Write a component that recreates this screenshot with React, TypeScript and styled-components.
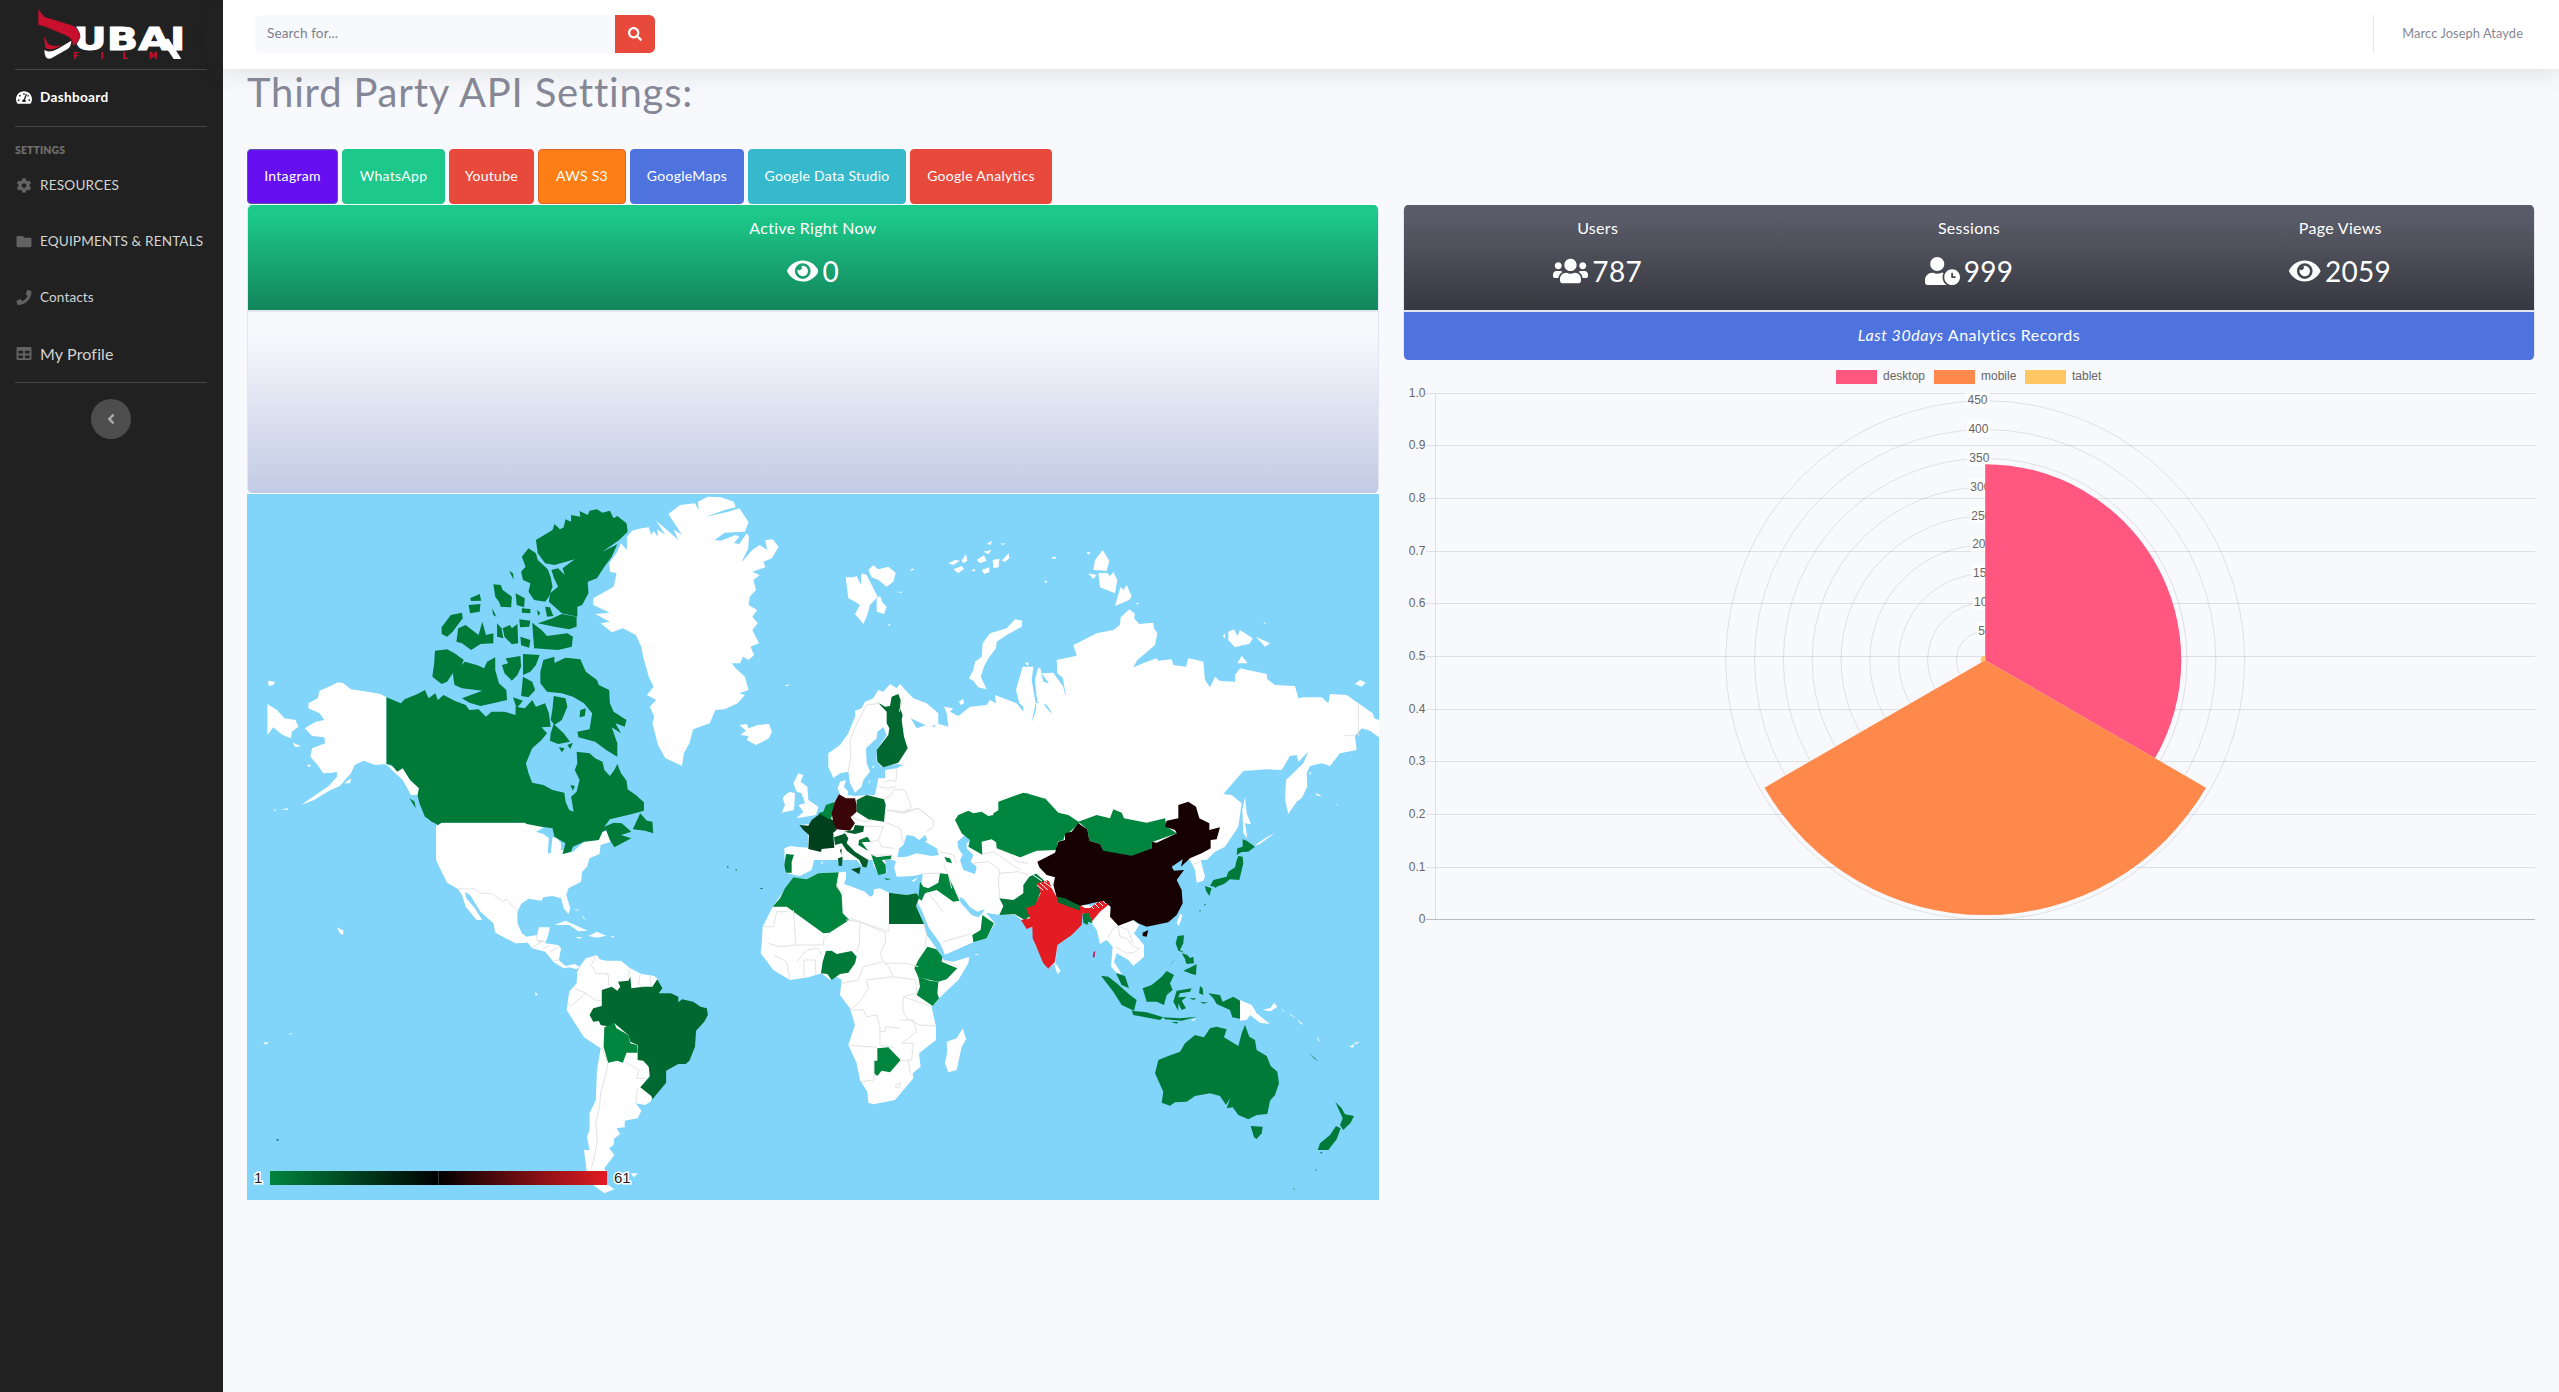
import React from 'react';
import styled, { createGlobalStyle, css } from 'styled-components';
import {
  FaAngleLeft,
  FaCog,
  FaEye,
  FaFolder,
  FaPhone,
  FaSearch,
  FaTable,
  FaTachometerAlt,
  FaUserClock,
  FaUsers,
} from 'react-icons/fa';

const GlobalStyle = createGlobalStyle`
  *, *::before, *::after { box-sizing: border-box; }
  body {
    margin: 0;
    background: #f8f9fc;
    color: #858796;
    font-family: Lato, "Open Sans", sans-serif;
    font-size: 16px;
    line-height: 1.5;
  }
`;

/* ---------- Shell ---------- */

const Page = styled.div`
  display: flex;
  width: 100%;
  min-height: 1392px;
`;

const Sidebar = styled.nav`
  display: flex;
  flex-direction: column;
  flex: 0 0 223px;
  background: #212121;
`;

const Brand = styled.div`
  height: 69px;
  padding-left: 30px;
`;

const Divider = styled.hr`
  width: 192px;
  height: 1px;
  margin: 0 0 0 15px;
  border: 0;
  background: #474747;
`;

const Heading = styled.div`
  padding: 16px 15px 0;
  height: 31px;
  color: #6d6d6d;
  font-size: 10.4px;
  font-weight: 800;
  line-height: 15px;
  letter-spacing: 0.15px;
`;

const NavItem = styled.a<{ $active?: boolean; $size?: number; $spacing?: number }>`
  display: flex;
  align-items: center;
  gap: 8px;
  height: 56px;
  padding: 0 0 1px 16px;
  white-space: nowrap;
  color: ${(p) => (p.$active ? '#fff' : '#d3d3d3')};
  font-size: ${(p) => p.$size ?? 13.6}px;
  font-weight: ${(p) => (p.$active ? 700 : 400)};
  letter-spacing: ${(p) => p.$spacing ?? 0.08}px;

  svg {
    flex: 0 0 16px;
    font-size: 15px;
    color: ${(p) => (p.$active ? '#fff' : '#636363')};
  }
`;

const Toggle = styled.button`
  display: flex;
  align-items: center;
  justify-content: center;
  align-self: center;
  width: 40px;
  height: 40px;
  margin: 16px 2px 0 0;
  padding: 0;
  border: 0;
  border-radius: 50%;
  background: #4d4d4d;
  color: #a9a9a9;
  font-size: 16px;
`;

const Content = styled.div`
  flex: 1;
  min-width: 0;
  display: flex;
  flex-direction: column;
`;

const Topbar = styled.header`
  display: flex;
  justify-content: space-between;
  height: 69px;
  padding: 15px 36px 0 32px;
  background: #fff;
  box-shadow: 0 2px 28px rgba(58, 59, 69, 0.15);
`;

const Search = styled.div`
  display: flex;
  height: 38px;
`;

const SearchField = styled.div`
  width: 360px;
  padding: 0 12px;
  border-radius: 5.6px 0 0 5.6px;
  background: #f8f9fc;
  color: #7d7f8c;
  font-size: 13.6px;
  line-height: 37px;
  letter-spacing: 0.1px;
`;

const SearchButton = styled.button`
  display: flex;
  align-items: center;
  justify-content: center;
  width: 40px;
  padding: 0;
  border: 0;
  border-radius: 0 5.6px 5.6px 0;
  background: #e74a3b;
  color: #fff;
  font-size: 14px;
`;

const Account = styled.div`
  height: 38px;
  padding-left: 28px;
  border-left: 1px solid #e3e6f0;
  color: #858796;
  font-size: 12.8px;
  line-height: 37px;
  letter-spacing: 0.1px;
`;

const Title = styled.h1`
  margin: 0;
  padding-left: 24px;
  height: 80px;
  font-size: 40px;
  font-weight: 400;
  line-height: 46px;
  letter-spacing: 0.8px;
`;

const ButtonRow = styled.div`
  display: flex;
  gap: 4px;
  padding-left: 24px;
`;

const ApiButton = styled.button<{ $width: number; $color: string; $border?: string }>`
  width: ${(p) => p.$width}px;
  height: 55px;
  padding: 0 0 2px;
  border: 1px solid ${(p) => p.$border ?? p.$color};
  border-radius: 4px;
  background: ${(p) => p.$color};
  color: #fff;
  font-family: inherit;
  font-size: 14px;
  letter-spacing: 0.3px;
  white-space: nowrap;
`;

/* ---------- Cards ---------- */

const Columns = styled.div`
  display: grid;
  grid-template-columns: 1132px 1132px;
  column-gap: 24px;
  padding: 1px 0 0 24px;
`;

const Column = styled.section`
  display: flex;
  flex-direction: column;
`;

const Card = styled.div`
  border: solid #e3e6f0;
  border-width: 0 1px;
  border-radius: 5px;
  overflow: hidden;
`;

const CardHeader = styled.div<{ $from: string; $to: string }>`
  display: flex;
  height: 105px;
  padding: 11px 8px 0;
  color: #fff;
  background: linear-gradient(180deg, ${(p) => p.$from} 10%, ${(p) => p.$to} 100%);
`;

const Metric = styled.div`
  flex: 1;
  display: flex;
  flex-direction: column;
  align-items: center;
  line-height: 24px;
  letter-spacing: 0.3px;
`;

const MetricValue = styled.div<{ $icon: number }>`
  display: flex;
  align-items: center;
  gap: 4px;
  margin-top: 14px;
  font-size: 28px;
  line-height: 34px;

  svg {
    flex: none;
    width: ${(p) => p.$icon}px;
    height: 28px;
  }
`;

const bar = css`
  border-top: 2px solid #e3e6f0;
`;

const LightBody = styled.div`
  ${bar}
  height: 183px;
  background: linear-gradient(180deg, #f8f9fc 10%, #c2cbe5 100%);
`;

const BlueFooter = styled.div`
  ${bar}
  height: 50px;
  background: #4e73df;
  color: #fff;
  line-height: 45px;
  letter-spacing: 0.5px;
  text-align: center;
`;

const MapCanvas = styled.svg`
  display: block;
  width: 1132px;
  height: 706px;
  margin-top: 1px;
  background: #81d4fa;
`;

const ChartCanvas = styled.svg`
  display: block;
  width: 1132px;
  height: 566px;
  font-family: "Liberation Sans", Arial, sans-serif;
  font-size: 12px;
`;

/* ---------- Logo ---------- */

const Logo = () => (
  <svg width="180" height="68" viewBox="0 0 540 204" aria-label="Dubai Film">
    <path d="M391 116 L416 116 L454 177 L431 177 Z" fill="#fff" />
    <text
      x="130"
      y="150"
      fill="#fff"
      stroke="#fff"
      strokeWidth="3"
      fontFamily="DejaVu Sans, sans-serif"
      fontWeight="700"
      fontSize="96"
      textLength="336"
      lengthAdjust="spacingAndGlyphs"
    >
      UBAI
    </text>
    <path d="M24 26 L44 50 L128 76 Q150 88 150 112 Q142 134 128 139 Q130 116 108 107 L44 80 L24 76 Z" fill="#c8102e" stroke="#212121" strokeWidth="2" />
    <path d="M42 108 L54 132 Q68 142 96 136 Q62 156 46 143 Z" fill="#c8102e" />
    <path d="M43 150 Q58 160 84 146 L124 122 Q124 138 113 147 L64 175 Q44 182 43 150 Z" fill="#fff" />
    <text x="129 211 277 356" y="177" fill="#c8102e" fontFamily="DejaVu Sans, sans-serif" fontWeight="700" fontSize="26">
      FILM
    </text>
  </svg>
);

/* ---------- World map ---------- */

const LAND = '#ffffff';
const G1 = '#00853e';
const G2 = '#007a39';
const G3 = '#00692f';

type Shape = [fill: string, points: string];
interface Sheet {
  transform: string;
  shapes: Shape[];
  borders?: string;
}

const americasNorth: Sheet = {
  transform: 'translate(240 490) scale(0.3699 0.33333)',
  shapes: [
    [LAND, '1046,140 1060,122 1085,115 1105,112 1112,135 1118,122 1130,140 1128,118 1150,135 1125,92 1160,125 1185,150 1172,118 1195,135 1158,72 1190,45 1230,40 1240,60 1238,35 1265,20 1300,22 1335,35 1340,52 1310,60 1260,80 1320,65 1350,55 1375,97 1365,125 1310,128 1283,150 1300,152 1340,135 1350,140 1335,160 1350,162 1370,130 1376,140 1374,175 1355,218 1385,180 1405,165 1425,180 1420,150 1440,148 1456,170 1438,205 1415,215 1420,232 1385,245 1405,255 1388,270 1395,300 1378,320 1375,345 1398,360 1385,380 1400,400 1385,420 1403,460 1380,470 1390,495 1375,510 1360,500 1352,520 1330,520 1340,535 1365,560 1375,600 1350,610 1365,615 1345,640 1310,658 1285,660 1270,700 1225,718 1215,760 1200,790 1195,828 1180,820 1150,805 1130,765 1115,700 1120,680 1108,650 1125,630 1100,615 1118,590 1105,560 1090,500 1085,470 1070,435 1035,415 1005,427 975,400 1000,395 960,372 1000,368 955,345 955,325 1010,290 1018,250 1000,245 998,220 1020,185 1030,160 1046,180'],
    [LAND, '1350,705 1370,702 1375,715 1400,705 1430,702 1438,725 1430,745 1395,765 1370,750 1375,738 1352,735 1368,722'],
    [LAND, '396,622 380,612 345,605 300,598 280,580 265,577 240,590 215,602 210,625 185,640 185,655 215,670 228,690 205,695 175,715 195,738 228,742 230,760 195,775 190,800 210,825 225,850 250,848 262,845 262,860 240,888 200,918 165,945 200,930 245,900 270,888 300,850 310,825 335,812 365,825 396,822 425,838 440,835 460,870 484,895 480,915 462,915 440,870 425,855 396,824'],
    [LAND, '74,642 100,660 120,685 150,690 158,710 140,725 138,745 115,735 90,712 74,735'],
    [LAND, '75,572 95,575 90,585 78,588'],
    [LAND, '142,758 165,768 150,772'],
    [LAND, '282,880 300,865 298,880'],
    [LAND, '180,824 192,824 188,832'],
    [LAND, '90,961 97,958 96,963'],
    [LAND, '112,958 130,955 128,960'],
    [LAND, '1472,588 1484,582 1482,588'],
    [G2, '396,622 435,640 445,628 480,612 500,600 510,625 528,610 535,630 550,615 580,632 610,645 620,660 645,658 665,680 680,665 715,665 745,675 745,650 770,655 790,630 800,650 825,640 835,670 840,710 815,712 830,730 815,750 790,775 773,820 780,850 790,878 820,885 845,900 877,908 880,935 890,960 902,965 895,920 910,905 918,870 905,840 912,820 910,785 945,790 960,805 980,815 985,840 1000,858 1012,840 1020,822 1030,850 1045,872 1048,898 1070,915 1092,937 1092,962 1060,972 1000,988 985,1010 1010,998 1032,1000 1058,1025 1030,1035 1058,1045 1012,1072 1000,1050 990,1020 980,1025 970,1050 930,1055 900,1070 895,1085 872,1092 880,1060 850,1040 845,1015 815,1010 775,1002 770,998 545,998 535,1005 500,980 485,940 480,915 484,895 460,870 440,835 425,845 410,825 396,822'],
    [G2, '1062,1018 1082,970 1100,992 1115,995 1117,1030 1095,1022'],
    [G2, '498,975 525,995 540,1005 518,995'],
    [G2, '458,925 472,935 475,955'],
    [G2, '527,482 560,478 580,490 605,510 595,535 575,550 560,575 545,582 520,560 525,520'],
    [G2, '575,550 608,515 640,525 660,535 668,515 690,502 690,540 700,580 720,600 722,630 690,638 650,648 620,638 600,625 655,602 600,595 580,585'],
    [G2, '708,525 725,520 718,505 758,498 760,530 750,555 735,572 715,550'],
    [G2, '765,492 810,495 800,525 785,545 765,555'],
    [G2, '765,560 790,575 798,600 780,622 760,618'],
    [G2, '738,622 765,632 748,655'],
    [G2, '820,510 850,500 850,560 848,520 880,503 920,508 935,545 965,570 970,585 998,600 1000,640 1010,665 1045,690 1040,710 1015,700 1030,730 1005,712 1020,760 1020,800 990,780 960,755 915,742 912,725 945,718 952,670 930,640 900,620 870,610 830,605 812,580 812,545'],
    [G2, '848,618 880,625 885,650 870,690 850,705 840,690 845,655'],
    [G2, '848,702 875,730 892,755 860,762 838,752 840,730'],
    [G2, '862,772 878,775 870,787'],
    [G2, '885,765 900,758 893,777'],
    [G2, '920,660 935,655 932,678 918,682'],
    [G2, '893,885 905,888 900,902'],
    [G2, '790,398 815,420 830,438 885,430 900,440 897,470 860,480 795,475'],
    [G2, '805,400 845,385 870,372 910,380 910,410 890,418 850,410'],
    [G2, '800,150 845,120 850,102 865,118 875,112 880,88 895,95 895,75 920,80 918,63 940,75 945,62 965,58 980,68 1000,62 1010,85 1020,78 1045,100 1048,125 1025,150 980,185 1020,163 1005,200 985,230 965,265 940,275 942,310 925,345 912,350 912,380 870,370 835,335 838,310 860,290 848,262 842,240 860,235 878,255 872,235 905,208 850,225 825,220 805,190'],
    [G2, '780,175 800,190 805,210 832,238 840,262 845,290 835,320 825,335 795,330 780,305 785,280 765,270 760,245 772,230 762,200'],
    [G2, '685,283 705,285 710,300 735,320 733,352 705,350 700,335 690,320'],
    [G2, '745,310 770,325 768,352 748,345'],
    [G2, '728,243 738,250 740,270'],
    [G2, '622,325 648,312 652,332 625,333'],
    [G2, '618,345 650,342 648,365 622,370'],
    [G2, '682,355 693,380 684,374'],
    [G2, '570,375 600,368 602,385 575,425 560,440 545,432 545,412'],
    [G2, '590,415 610,405 645,435 655,395 665,435 685,430 685,460 650,462 625,480 600,460 585,455'],
    [G2, '695,400 707,415 712,445 695,440'],
    [G2, '710,415 730,405 735,415 750,402 752,460 735,463 715,440'],
    [G2, '758,440 785,450 782,473 760,466'],
    [G2, '755,388 785,392 782,410 757,412'],
    [G2, '762,355 785,357 785,370 762,368'],
    [G2, '825,350 838,352 847,378 830,380'],
    [G2, '803,360 812,368 806,378'],
  ],
};

const americasSouth: Sheet = {
  transform: 'translate(240 840) scale(0.3699 0.33333)',
  shapes: [
    [LAND, '530,-42 545,-52 770,-52 815,-40 850,-10 878,12 872,42 900,35 930,5 968,0 980,-25 990,-28 1002,5 975,15 972,42 945,55 938,80 925,95 922,125 888,145 882,165 893,205 888,222 875,205 868,175 845,168 820,172 815,182 780,176 760,192 750,215 750,250 762,280 775,290 803,285 808,262 838,262 832,290 825,310 860,315 868,325 862,360 880,378 905,372 918,380 910,388 890,382 875,385 850,368 825,335 790,325 778,308 745,310 690,278 685,250 650,215 622,165 608,155 612,175 635,205 655,240 640,240 610,200 600,165 590,148 560,128 545,95 530,60'],
    ['#81d4fa', '800,-25 830,-42 850,-28 872,-8 845,-8 840,40 832,40 835,-5 820,-18'],
    ['#81d4fa', '858,-5 880,10 875,30 868,30 868,10'],
    [LAND, '850,255 880,242 940,272 915,274 890,255'],
    [LAND, '942,288 965,275 990,287 965,293'],
    [LAND, '1000,289 1012,289 1010,293'],
    [LAND, '907,291 926,291 918,296'],
    [LAND, '905,208 918,210 908,212'],
    [LAND, '925,225 935,240 928,235'],
    [LAND, '262,262 280,272 278,285 270,280'],
    [LAND, '62,608 78,606 70,614'],
    [LAND, '132,580 143,581 137,584'],
    [LAND, '797,457 805,462 800,468'],
    [LAND, '918,380 935,355 965,345 972,358 990,362 1030,362 1055,385 1085,402 1120,408 1130,418 1100,480 1080,600 1078,640 1105,680 1108,705 1085,740 1115,770 1110,785 1095,795 1070,790 1085,812 1075,835 1040,842 1040,862 1018,865 1028,882 1012,895 1010,915 998,925 1012,945 985,985 992,1000 990,1030 1012,1048 985,1060 955,1035 938,1000 930,930 945,930 938,890 945,870 945,820 962,780 965,690 975,625 930,592 883,510 890,455 910,430 912,395'],
    [LAND, '1056,1000 1075,1000 1065,1012'],
    [G3, '978,450 1005,440 1020,452 1028,440 1022,425 1050,422 1055,410 1058,445 1090,440 1115,440 1128,418 1142,445 1132,460 1165,460 1185,470 1185,487 1195,478 1225,485 1245,500 1262,505 1265,525 1255,545 1233,572 1230,620 1215,662 1205,672 1185,672 1152,692 1152,728 1115,778 1112,768 1082,742 1108,710 1105,680 1090,662 1075,660 1075,615 1055,605 1050,585 1012,550 1000,560 975,555 970,543 955,545 945,525 955,505 978,498'],
    [G1, '985,562 1012,550 1018,565 1050,585 1055,610 1073,615 1075,638 1045,638 1035,668 1020,662 995,668 983,620'],
    ['#0b6f8f', '99,897 104,897 104,902 99,902'],
    [G3, '1316,78 1321,80 1319,84'],
    [G3, '1339,88 1344,89 1341,93'],
    [G3, '1407,144 1413,145 1409,148'],
  ],
  borders:
    'M590,147 H635 L650,160 H680 L710,185 L720,178 L752,215 M803,285 V300 L820,303 L790,322 M820,325 L835,318 M838,335 L860,322 M850,362 L862,360 M962,348 L950,375 L962,400 L995,402 L998,440 M905,445 L935,460 L892,500 L888,488 M935,460 L960,480 L975,482 M1055,385 L1050,410 M1082,402 L1078,430 L1088,442 M1110,408 V438 M978,620 L995,672 L985,720 L975,760 L972,800 L962,850 L966,900 L960,940 L950,985 M1040,665 L1078,690 L1072,715 H1100 M1075,745 L1070,790 M803,305 H825',
};

const europeNorth: Sheet = {
  transform: 'translate(740 490) scale(0.33333)',
  shapes: [
    [LAND, '265,790 300,765 325,730 345,680 345,662 365,655 375,635 400,625 415,600 430,605 450,582 470,595 480,582 498,602 520,625 560,640 595,670 595,700 570,712 512,685 530,715 560,705 582,712 560,745 590,700 625,710 620,670 612,650 640,655 630,665 655,678 690,650 740,645 750,630 768,640 765,615 830,640 850,665 850,650 838,640 828,600 848,530 880,530 875,570 887,640 875,698 890,660 888,640 905,635 925,670 940,682 925,645 890,620 885,570 895,530 905,578 930,585 905,550 940,548 970,590 975,615 983,620 970,565 952,550 952,510 1020,498 1020,1110 135,1110 135,1075 150,1068 205,1075 208,1025 180,1005 235,1000 250,970 280,935 305,930 293,895 300,875 318,870 312,890 325,905 322,915 345,918 380,915 405,915 412,880 415,865 435,865 435,840 470,835 490,825 470,822 425,830 410,815 410,780 440,735 430,712 412,725 410,745 378,775 380,820 390,845 370,870 365,890 345,908 330,880 325,845 300,850 280,865 265,830'],
    [LAND, '175,850 190,855 182,875 202,890 205,930 235,950 228,975 170,985 190,965 175,945 195,940 185,910 170,905 160,880'],
    [LAND, '135,915 150,905 165,910 162,960 125,968 135,945 128,925'],
    [LAND, '317,262 340,262 350,258 362,285 365,250 380,255 400,295 413,320 390,345 382,375 370,402 345,372 360,345 345,335 325,325'],
    [LAND, '385,240 400,226 415,238 445,230 467,248 460,275 440,290 415,270 395,262'],
    [LAND, '410,325 420,318 428,338 440,350 432,372 410,365'],
    [LAND, '508,242 518,235 522,240'],
    [LAND, '475,308 485,304 486,308'],
    [LAND, '445,402 451,402 448,410'],
    [LAND, '625,220 645,210 660,212 640,225'],
    [LAND, '665,212 678,192 682,212 670,220'],
    [LAND, '640,238 665,228 672,236 655,250'],
    [LAND, '710,210 732,196 740,212 720,220'],
    [LAND, '730,185 755,180 745,192'],
    [LAND, '740,162 756,152 752,164'],
    [LAND, '758,210 778,206 776,232 760,234'],
    [LAND, '725,240 748,232 748,246 732,252'],
    [LAND, '785,212 806,190 808,205 795,215'],
    [LAND, '693,242 704,236 706,244'],
    [LAND, '782,160 798,161 788,165'],
    [LAND, '935,204 948,200 946,207'],
    [LAND, '912,273 922,274 918,278'],
    [LAND, '687,565 700,540 705,515 725,500 728,460 750,430 800,415 825,388 847,392 845,410 800,435 770,455 768,475 745,505 732,530 722,560 740,598 715,592 700,572'],
    [LAND, '657,635 670,626 672,640 662,645'],
    [LAND, '855,520 865,515 865,528'],
    [LAND, '395,832 403,826 402,834'],
    [LAND, '385,880 392,865 388,880'],
    [G3, '412,636 435,650 450,648 455,620 475,612 482,630 480,655 488,675 485,690 492,740 503,775 475,818 430,832 412,815 410,780 445,735 448,715 440,700 440,665'],
  ],
  borders:
    'M420,640 L380,645 L355,690 L330,750 L332,800 L325,845 M470,838 L468,875 L450,870 L430,878 M415,890 L445,895 L468,890 M435,925 L450,920 L462,898 L495,900 L515,950 L490,970 L440,960 M490,970 L535,955 L580,990 L582,1020 L560,1030 M478,665 L490,620',
};

const europeAfrica: Sheet = {
  transform: 'translate(740 780) scale(0.33333)',
  shapes: [
    [LAND, '205,140 1020,120 1020,440 1000,450 950,492 948,545 925,566 885,495 880,440 860,445 845,420 825,405 780,405 738,398 765,430 740,475 700,487 615,524 600,490 565,440 545,390 533,370 540,340 545,310 548,282 520,288 470,290 462,262 468,245 455,238 435,240 440,280 415,282 400,255 395,225 375,205 345,182 350,200 385,240 370,265 350,240 320,210 300,190 270,200 245,215 205,203'],
    [LAND, '133,205 150,200 205,203 247,215 222,240 215,270 180,288 155,283 135,278'],
    [LAND, '98,380 160,292 200,298 235,280 295,277 318,275 318,295 312,312 330,318 375,335 390,350 400,345 402,328 420,325 447,338 500,345 530,340 538,352 528,378 545,415 560,465 600,520 610,540 640,545 688,530 685,550 655,600 597,655 575,682 588,740 588,780 537,820 542,860 518,880 520,895 465,960 400,973 385,968 382,935 360,900 350,850 325,795 345,735 330,685 300,645 305,600 290,590 270,600 245,580 205,592 150,600 100,570 62,520 65,495 68,440'],
    [LAND, '668,745 678,778 665,800 650,870 625,877 615,850 622,815 620,785 650,775'],
    ['#81d4fa', '500,165 520,168 538,180 555,165 562,180 555,185 590,205 597,225 575,228 530,220 500,230 472,232 478,205 490,195'],
    ['#81d4fa', '652,185 675,165 697,162 697,180 680,190 680,205 700,225 692,245 710,260 705,282 670,270 660,240 668,225 655,205'],
    ['#81d4fa', '658,350 672,358 690,382 712,395 735,388 725,402 715,412 695,405 662,368'],
    [LAND, '515,302 535,292 522,305'],
    [LAND, '242,248 250,244 246,253'],
    [LAND, '705,522 718,523 708,526'],
    [G1, '98,380 120,355 135,325 160,292 200,298 235,280 297,277 290,315 305,345 308,400 328,420 268,458 250,460 140,380'],
    [G3, '447,338 500,345 530,340 538,352 528,378 552,432 447,432'],
    [G2, '258,513 275,512 290,522 335,513 350,530 345,550 325,578 300,582 275,600 262,582 243,580 248,545'],
    [G1, '562,500 590,508 607,530 605,545 652,565 620,598 595,605 570,600 535,592 523,565 535,540'],
    [G1, '535,590 570,602 595,605 592,640 597,655 578,678 530,645 540,620'],
    [G1, '412,805 445,802 482,840 450,877 425,872 412,888 402,880 402,842 412,842'],
    [G2, '138,222 162,224 155,245 155,278 137,278 133,255'],
    ['#00401d', '178,135 205,137 215,120 235,105 240,98 265,110 288,128 290,150 280,165 283,203 245,207 243,216 205,207 207,165 190,150'],
    [G1, '258,75 285,65 280,95 272,120 235,100 250,95'],
    ['#005c2a', '282,172 315,160 325,175 320,190 345,215 385,240 380,262 368,262 358,240 320,212 305,190 285,195'],
    ['#004a22', '333,268 362,262 358,283'],
    ['#005c2a', '294,235 308,230 306,258 296,257'],
    ['#00401d', '300,210 305,206 304,225'],
    ['#3a0508', '297,43 318,55 345,55 350,75 350,95 332,112 345,130 330,152 290,148 280,128 275,100 285,65'],
    [G3, '350,60 380,45 432,58 437,75 432,125 385,118 350,95'],
    ['#00602d', '312,155 340,150 345,135 372,138 370,155 345,162'],
    [LAND, '278,160 290,150 312,155 310,162 290,168'],
    [G2, '357,180 382,170 392,185 365,187 385,213 355,195'],
    [G1, '393,222 410,232 455,226 452,238 425,240 437,255 438,280 415,285 405,258'],
    [G1, '432,295 455,297 440,300'],
    [G1, '645,120 655,105 685,92 700,100 725,95 745,108 775,102 775,65 850,38 865,42 870,60 895,62 915,55 955,98 985,105 1020,128 985,160 955,172 950,210 890,210 840,232 820,205 795,205 755,178 725,185 727,224 685,200 690,180 665,160'],
    [G1, '600,280 625,283 630,300 640,320 658,362 640,365 590,330 555,340 545,362 535,355 540,305 550,320 565,325 595,308'],
    [G1, '613,231 630,235 636,250 620,245'],
    [G1, '727,405 762,430 740,475 700,487 697,465 722,450'],
    [G2, '868,290 890,280 920,310 900,340 885,380 890,400 860,415 865,428 845,415 825,403 778,405 790,378 778,355 820,360 850,340 850,315'],
    [G3, '60,324 68,324 66,327'],
  ],
  borders:
    'M68,440 H100 L110,395 H145 M160,390 L168,495 L120,500 L85,490 M168,495 H250 L252,475 L270,460 M100,525 L140,545 L150,598 M170,545 L200,510 L235,505 L245,525 M192,592 V540 H225 L228,585 M318,420 L360,425 L358,490 L350,515 M297,277 L290,320 L310,345 M447,432 V455 L330,415 M360,425 L438,460 L435,490 L420,520 L430,545 L370,560 L355,600 L305,610 M430,545 L445,560 L460,590 L380,600 L385,625 L360,665 L330,690 H370 L380,710 L410,705 L420,740 V795 L460,802 M435,550 L500,550 L535,560 M460,590 L528,600 L530,640 L490,650 L488,690 L500,715 L540,735 L588,738 M420,755 H435 L438,740 L480,745 M480,720 L520,720 L530,755 L485,790 L520,790 L515,840 L480,842 M325,795 L410,802 M402,842 V900 L360,905 M505,842 L512,885 M470,912 L482,910 L478,922 L466,922 Z M552,432 L560,465 L555,500 M575,680 L490,650 M610,540 L655,560 M610,485 L690,462 M562,335 L610,395 M545,280 L600,280 M635,325 L625,283 L610,250 M697,250 L745,245 L780,270 L775,300 L780,355 M727,222 L760,215 L840,270 M795,205 L830,245 L865,250 M780,280 L835,275 L865,285 M440,90 L490,95 L535,85 L580,120 L580,140 L560,155 M432,125 L480,145 L490,190 M372,138 L430,140 L415,180 L392,185 M415,180 L425,200 L460,205 M395,225 L455,225 M335,110 L370,125 L395,120 M600,215 L640,225 L650,250',
};

const asiaNorth: Sheet = {
  transform: 'translate(1030 490) scale(0.33333)',
  shapes: [
    [LAND, '80,510 140,497 130,465 150,455 200,430 250,420 270,405 272,382 298,358 315,372 312,385 328,402 370,398 372,415 382,430 375,465 340,495 322,510 310,532 350,515 380,505 385,512 425,508 430,525 468,530 475,505 500,510 520,515 525,570 540,592 555,560 570,573 615,575 615,555 630,535 710,552 712,568 735,585 795,588 805,625 820,622 875,622 895,640 900,612 950,615 985,640 1028,670 1033,685 1047,690 1047,742 1020,722 995,715 975,738 980,780 930,790 900,828 875,820 840,828 830,850 832,890 815,925 800,935 775,972 765,930 768,870 820,820 835,785 805,815 800,795 780,798 755,840 710,838 640,843 580,912 605,915 635,940 625,1010 585,1070 555,1085 530,1110 -20,1110 -20,720 10,690 20,650 35,635 55,660 78,685 50,645 22,635 20,560 30,530 40,575 62,582 100,600 108,620 98,560 82,545'],
    [LAND, '645,920 650,970 663,1003 645,1000 652,1045 640,1030 637,960'],
    [LAND, '218,180 238,212 230,242 190,240 195,210'],
    [LAND, '205,250 230,248 240,258 250,246 262,270 255,310 210,292'],
    [LAND, '175,250 200,255 190,268'],
    [LAND, '255,348 272,290 280,300 290,285 305,318 298,330'],
    [LAND, '595,425 612,418 622,438 630,420 668,445 658,462 640,465 615,472 595,450'],
    [LAND, '678,440 720,460 705,470'],
    [LAND, '622,520 635,497 653,520'],
    [LAND, '975,582 990,570 1007,578 995,590'],
    [LAND, '170,186 182,187 175,194'],
    [LAND, '318,338 328,340 322,344'],
    [LAND, '65,202 80,200 70,207'],
    [LAND, '42,273 54,275 46,278'],
    [LAND, '578,438 586,430 585,445'],
    [LAND, '700,398 708,398 704,402'],
    [LAND, '855,908 868,914 876,918 862,917'],
    [LAND, '838,848 846,846 838,856'],
    [LAND, '918,943 925,944 922,947'],
    [LAND, '672,1068 705,1045 735,1028 690,1062'],
  ],
  borders: 'M985,640 V738 M945,737 H975',
};

const asiaSouth: Sheet = {
  transform: 'translate(1000 780) scale(0.33333)',
  shapes: [
    [LAND, '570,240 605,215 640,208 602,240 615,290 610,302 590,308 585,270'],
    [LAND, '530,430 540,402 548,405 537,438'],
    [LAND, '240,370 272,378 330,370 335,405 355,437 400,420 418,435 402,460 432,495 432,530 400,558 385,540 350,520 342,545 365,582 350,578 333,560 338,500 320,480 300,492 290,450 275,430 248,392'],
    [LAND, '162,550 168,552 182,572 172,583'],
    [G1, '-20,100 80,40 130,55 170,100 200,105 235,128 200,150 190,180 172,185 170,210 110,212 60,232 -10,205'],
    [G1, '235,125 290,105 330,115 340,88 365,98 372,115 440,128 495,115 500,140 530,160 455,187 455,205 395,229 310,214 300,192 268,182 262,148'],
    ['#e31b23', '110,310 145,300 158,330 170,352 240,377 248,380 268,385 300,362 312,360 325,375 300,395 275,425 268,405 248,400 245,435 215,465 172,495 165,545 145,566 130,550 98,475 97,440 80,447 63,420 90,415 78,385 105,375 122,340'],
    [G2, '248,402 266,398 278,430 265,425 262,435 250,428'],
    ['#170000', '112,245 165,218 175,185 195,180 195,160 215,155 235,130 262,148 268,182 300,192 310,212 395,227 455,205 455,185 470,188 530,160 525,150 495,140 500,122 535,115 535,75 565,65 588,80 598,115 628,130 628,150 660,142 650,178 632,180 632,205 605,220 570,235 543,260 548,238 515,260 522,272 552,270 530,300 545,330 548,370 530,405 505,427 440,440 415,430 400,420 355,437 330,410 332,380 310,362 275,370 240,378 170,352 160,315 165,292 140,285 118,262'],
    ['#170000', '428,458 445,450 440,470 428,468'],
    [G3, '170,350 195,355 240,377 240,392 175,368'],
    [LAND, '248,375 268,377 272,384 252,384'],
    ['#c2185b', '281,515 286,514 283,533 278,530'],
    [G2, '728,178 740,182 765,200 745,215 725,216 710,225 712,205 728,200'],
    [G2, '715,228 728,230 730,250 718,300 690,298 672,312 650,320 630,318 640,300 680,290 685,275 705,262 710,240'],
    [G2, '615,318 635,325 628,348 618,332'],
    [G2, '640,318 652,312 648,325'],
    [G2, '533,468 552,466 550,490 540,510 555,518 535,512 527,490'],
    [G2, '545,520 562,525 575,540 560,545'],
    [G2, '590,552 588,585 575,582 550,572 575,560'],
    [G2, '528,535 505,562 520,545'],
    [G2, '555,540 580,530 582,550 560,552'],
    [G2, '303,587 325,590 350,610 390,645 410,660 402,692 365,675 340,635'],
    [G2, '348,580 375,588 387,625 365,615'],
    [G2, '395,692 440,697 490,712 480,720 400,705'],
    [G2, '428,625 455,615 485,590 500,573 522,585 510,610 518,630 500,645 492,675 470,665 440,665'],
    [G2, '530,632 575,625 570,635 540,640 535,652 560,650 545,662 558,685 545,690 535,670 535,693 520,665'],
    [G2, '490,712 540,715 592,710 545,722 495,718'],
    [G2, '512,725 535,726 530,731'],
    [G2, '600,618 608,625 610,645 597,640'],
    [G2, '568,655 590,655 580,660'],
    [G2, '600,665 625,668 610,671'],
    [G2, '625,640 660,645 668,665 700,650 720,662 720,716 697,712 690,690 650,672 640,655'],
    [LAND, '720,660 755,675 770,700 810,732 780,728 750,705 740,720 720,722'],
    [LAND, '788,690 812,683 822,668 832,680 812,694'],
    [LAND, '843,686 860,698 848,692'],
    [LAND, '865,698 890,715 875,708'],
    [LAND, '892,718 912,735 900,730'],
    [LAND, '950,768 962,788 954,780'],
    [LAND, '1048,800 1062,792 1060,803'],
    [LAND, '1062,790 1078,784 1070,793'],
    [LAND, '572,722 590,713 582,722'],
    [G2, '465,880 475,840 505,828 540,815 555,790 585,765 612,772 630,745 650,740 680,748 672,772 715,798 725,760 735,735 748,770 765,780 770,810 800,828 812,858 832,875 837,910 825,945 810,962 802,1002 770,1005 745,1018 715,1005 698,982 680,985 690,955 678,975 660,948 630,940 585,948 560,965 525,967 510,977 485,968 490,935'],
    [G2, '752,1038 788,1040 785,1060 770,1077 762,1072'],
    [G2, '1006,966 1025,985 1035,1003 1062,1008 1052,1028 1030,1050 1020,1035 1028,1015'],
    [G2, '1008,1038 1022,1045 1010,1078 985,1110 953,1110 960,1090 990,1065'],
    [G2, '960,1117 968,1117 964,1122'],
    [G2, '928,820 957,845 942,835'],
    [G2, '945,1170 950,1167 948,1172'],
    [G2, '880,1225 885,1226 882,1229'],
    [G2, '597,393 603,389 600,395'],
    [G2, '612,374 618,370 615,377'],
  ],
  borders:
    'M325,470 L340,445 L355,440 L360,470 L380,475 L400,500 L420,505 M345,500 L380,520 L400,518 L420,505 M360,440 L385,450 L398,490 M575,255 L600,245',
};

const sheets = [americasSouth, americasNorth, europeNorth, asiaNorth, europeAfrica, asiaSouth];

const WorldMap = () => (
  <MapCanvas viewBox="247 494 1132 706" aria-label="Visitors by country">
    <defs>
      <linearGradient id="scale">
        <stop offset="0" stopColor="#00853e" />
        <stop offset="0.5" stopColor="#000" />
        <stop offset="1" stopColor="#e31b23" />
      </linearGradient>
    </defs>
    {sheets.map((sheet) => (
      <g key={sheet.transform} transform={sheet.transform}>
        {sheet.shapes.map(([fill, points]) => (
          <polygon key={points} points={points} fill={fill} />
        ))}
        {sheet.borders && (
          <path d={sheet.borders} fill="none" stroke="#e2e2e2" strokeWidth="1" vectorEffect="non-scaling-stroke" />
        )}
      </g>
    ))}
    <path
      d="M1033 875 L1042 881 M1036 873 L1047 882 M1040 873 L1050 881 M1037 885 L1043 890 M1040 883 L1048 890 M1044 882 L1052 888 M1048 880 L1053 884 M1091 906 L1094 909 M1095 904 L1099 908 M1099 902 L1103 906 M1103 901 L1106 904"
      stroke="#fff"
      strokeWidth="1"
    />
    <rect x="270" y="1171" width="337" height="14" fill="url(#scale)" />
    <rect x="438" y="1171" width="1" height="14" fill="#333" />
    <g fontFamily="Liberation Sans, Arial, sans-serif" fontSize="15" fill="#222" stroke="#fff" strokeWidth="3" paintOrder="stroke">
      <text x="254" y="1183">1</text>
      <text x="614" y="1183">61</text>
    </g>
  </MapCanvas>
);

/* ---------- Device chart ---------- */

const CX = 1985.2;
const CY = 660.2;
const MAX_RADIUS = 259.5;
const MAX_VALUE = 450;

const radiusOf = (value: number) => (value / MAX_VALUE) * MAX_RADIUS;

const slicePath = (value: number, index: number) => {
  const r = radiusOf(value);
  const point = (turn: number) => {
    const a = turn * 2 * Math.PI - Math.PI / 2;
    return `${CX + r * Math.cos(a)} ${CY + r * Math.sin(a)}`;
  };
  return `M${CX} ${CY} L${point(index / 3)} A${r} ${r} 0 0 1 ${point((index + 1) / 3)} Z`;
};

const devices = [
  { name: 'desktop', value: 340, color: '#ff577f', boxX: 1836, textX: 1883 },
  { name: 'mobile', value: 442, color: '#ff884b', boxX: 1934, textX: 1981 },
  { name: 'tablet', value: 8, color: '#ffc764', boxX: 2025, textX: 2072 },
];

const axisLabels = ['1.0', '0.9', '0.8', '0.7', '0.6', '0.5', '0.4', '0.3', '0.2', '0.1', '0'];
const ringValues = [50, 100, 150, 200, 250, 300, 350, 400, 450];

const DeviceChart = () => (
  <ChartCanvas viewBox="1403 360 1132 566" aria-label="Visits by device">
    {devices.map((d) => (
      <g key={d.name}>
        <rect x={d.boxX} y="370" width="41" height="14" fill={d.color} />
        <text x={d.textX} y="380" fill="#666">{d.name}</text>
      </g>
    ))}
    {axisLabels.map((label, i) => {
      const y = Math.round(392.8 + 52.65 * i) + 0.5;
      return (
        <g key={label}>
          <line x1="1426" x2="2535" y1={y} y2={y} stroke={label === '0' ? '#babbbd' : '#dfe0e3'} />
          <text x="1425.5" y={y + 3} textAnchor="end" fill="#666">{label}</text>
        </g>
      );
    })}
    <line x1="1435.5" x2="1435.5" y1="393" y2="919" stroke="#dfe0e3" />
    {ringValues.map((v) => (
      <circle key={v} cx={CX} cy={CY} r={radiusOf(v)} fill="none" stroke="rgba(0,0,0,0.1)" />
    ))}
    {ringValues.map((v) => {
      const x = 1985.9 - (v / 50) * 0.93;
      const y = CY - radiusOf(v);
      const half = v < 100 ? 9 : 12;
      return (
        <g key={v}>
          <rect x={x - half} y={y - 9} width={half * 2} height="16" fill="rgba(255,255,255,0.75)" />
          <text x={x} y={y + 3.6} textAnchor="middle" fill="#666">{v}</text>
        </g>
      );
    })}
    {devices.map((d, i) => (
      <path key={d.name} d={slicePath(d.value, i)} fill={d.color} />
    ))}
  </ChartCanvas>
);

/* ---------- Page ---------- */

const apiButtons = [
  { label: 'Intagram', width: 91, color: '#6610f2', border: '#5a5c9a' },
  { label: 'WhatsApp', width: 103, color: '#1cc88a' },
  { label: 'Youtube', width: 85, color: '#e74a3b' },
  { label: 'AWS S3', width: 88, color: '#fd7e14', border: '#e2602b' },
  { label: 'GoogleMaps', width: 114, color: '#4e73df' },
  { label: 'Google Data Studio', width: 158, color: '#36b9cc' },
  { label: 'Google Analytics', width: 142, color: '#e74a3b' },
];

export default function App() {
  return (
    <>
      <GlobalStyle />
      <Page>
        <Sidebar>
          <Brand><Logo /></Brand>
          <Divider />
          <NavItem $active $spacing={0.3}><FaTachometerAlt />Dashboard</NavItem>
          <Divider />
          <Heading>SETTINGS</Heading>
          <NavItem $spacing={0.2}><FaCog />RESOURCES</NavItem>
          <NavItem $spacing={0.13}><FaFolder />EQUIPMENTS &amp; RENTALS</NavItem>
          <NavItem $spacing={0.1}><FaPhone />Contacts</NavItem>
          <NavItem $size={16} $spacing={0.15}><FaTable />My Profile</NavItem>
          <Divider />
          <Toggle aria-label="Collapse sidebar"><FaAngleLeft /></Toggle>
        </Sidebar>
        <Content>
          <Topbar>
            <Search>
              <SearchField>Search for...</SearchField>
              <SearchButton aria-label="Search"><FaSearch /></SearchButton>
            </Search>
            <Account>Marcc Joseph Atayde</Account>
          </Topbar>
          <Title>Third Party API Settings:</Title>
          <ButtonRow>
            {apiButtons.map((b) => (
              <ApiButton key={b.label} $width={b.width} $color={b.color} $border={b.border}>
                {b.label}
              </ApiButton>
            ))}
          </ButtonRow>
          <Columns>
            <Column>
              <Card>
                <CardHeader $from="#1cc88a" $to="#13855c">
                  <Metric>
                    Active Right Now
                    <MetricValue $icon={31.5}><FaEye />0</MetricValue>
                  </Metric>
                </CardHeader>
                <LightBody />
              </Card>
              <WorldMap />
            </Column>
            <Column>
              <Card>
                <CardHeader $from="#5a5c69" $to="#373840">
                  <Metric>
                    Users
                    <MetricValue $icon={35}><FaUsers />787</MetricValue>
                  </Metric>
                  <Metric>
                    Sessions
                    <MetricValue $icon={35}><FaUserClock />999</MetricValue>
                  </Metric>
                  <Metric>
                    Page Views
                    <MetricValue $icon={31.5}><FaEye />2059</MetricValue>
                  </Metric>
                </CardHeader>
                <BlueFooter><i>Last 30days</i> Analytics Records</BlueFooter>
              </Card>
              <DeviceChart />
            </Column>
          </Columns>
        </Content>
      </Page>
    </>
  );
}
